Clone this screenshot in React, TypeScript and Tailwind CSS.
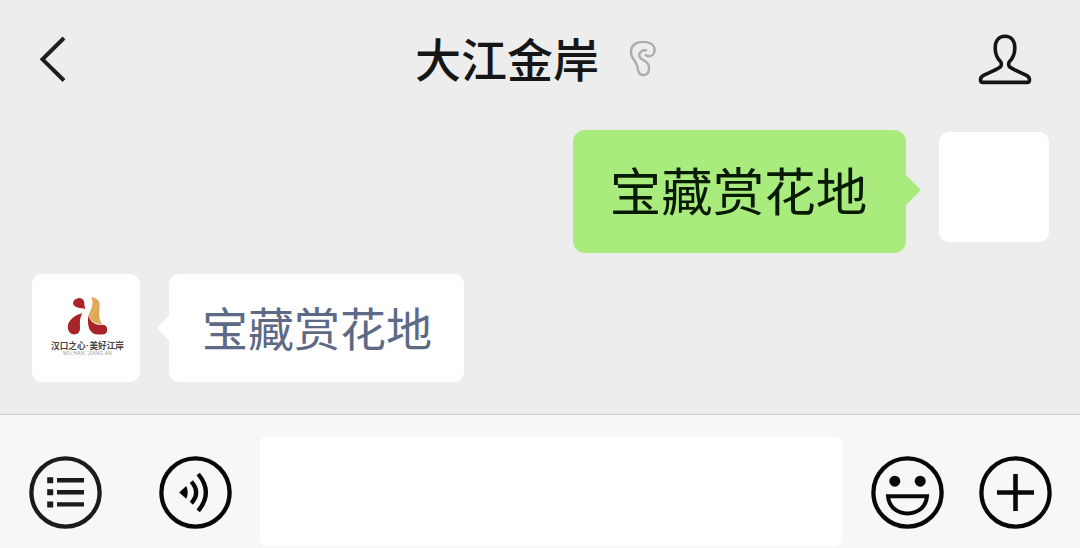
import React from 'react';

const BackIcon: React.FC = () => (
  <svg width="30" height="48" viewBox="0 0 30 48" fill="none" stroke="#1f1f1f" strokeWidth="4">
    <path d="M26 3 L4.5 24.3 L26 45.5" />
  </svg>
);

const EarIcon: React.FC = () => (
  <svg width="28" height="38" viewBox="0 0 28 38" fill="none" stroke="#acacac" strokeWidth="2.4" strokeLinecap="round" strokeLinejoin="round">
    <path d="M17.2 10.4 C13.5 9.8 10.3 12 10.3 15.2 C10.3 18.2 12.4 19.2 15.5 20.8 C18.8 22.6 20 25 20 28.2 C20 32.5 17.8 35 14.3 35 C10.8 35 9.3 32.5 8.8 29 C8.3 24.7 6.4 21.8 4.2 18.8 C2.5 16.5 1.9 14 1.9 11.5 C1.9 5.5 7 1.9 13.8 1.9 C20.8 1.9 25.6 4.8 25.6 10 C25.6 13.8 23.2 16.2 20 16.2 C18.4 16.2 17.4 15.8 16.8 15" />
  </svg>
);

const PersonIcon: React.FC = () => (
  <svg width="54" height="52" viewBox="0 0 54 52" fill="none" stroke="#141414" strokeWidth="3.6" strokeLinejoin="round">
    <path d="M27 3.3 C20.5 3.3 17.2 8.3 17.2 15 C17.2 21 19.2 25.3 22.5 28.5 C23.6 29.6 23.7 32.8 22.2 34 C17.5 37.3 10.5 39.8 5.5 42.3 C3 43.6 2.5 45.1 2.5 47 Q2.5 49.4 5 49.4 H49 Q51.5 49.4 51.5 47 C51.5 45.1 51 43.6 48.5 42.3 C43.5 39.8 36.5 37.3 31.8 34 C30.3 32.8 30.4 29.6 31.5 28.5 C34.8 25.3 36.8 21 36.8 15 C36.8 8.3 33.5 3.3 27 3.3 Z" />
  </svg>
);

const RoundIcon: React.FC<{ label: string; color?: string; children: React.ReactNode }> = ({
  label,
  color = '#080808',
  children,
}) => (
  <button aria-label={label} className="shrink-0">
    <svg width="73" height="73" viewBox="0 0 73 73" fill="none" stroke={color} strokeWidth="4.3">
      <circle cx="36.5" cy="36.5" r="34.1" />
      {children}
    </svg>
  </button>
);

const Logo: React.FC = () => (
  <svg width="42" height="42" viewBox="0 0 42 42" className="ml-[2px]">
    <path d="M12.5 2.2 C16 1.6 18 4 18.3 7 C18.5 9.5 18.6 11.5 19.6 13.3 C17 12.2 14.5 12.6 11.5 11.6 C8.6 10.6 6.9 9 7 6.8 C7.2 4.3 9.6 2.6 12.5 2.2 Z" fill="#a92426" />
    <path d="M16.3 17.3 C9 18.8 1.8 24.5 1.8 31 C1.8 35.5 4.8 38.4 8.4 38.4 C12.6 38.4 14.4 35.2 14 30.5 C13.6 26 14 21 16.3 17.3 Z" fill="#a92426" />
    <path d="M22.6 19 C21.6 24 21.7 30 24 34 C26 37.4 28.5 38.4 32 38.4 H36.5 C40 38.4 41.5 36 41.2 33 C40.9 29.6 39 28.6 35 28.8 C29.3 29 24 26.5 22.6 19 Z" fill="#a92426" />
    <path d="M25.3 1.2 C30.5 1.7 33.6 4.5 33.7 9 C33.8 13 33 16 33.3 20 C33.6 23.5 34.5 26 36 28 C29.8 28.4 23.6 25.4 22.8 18.6 C24.5 13.5 28.5 9 25.3 1.2 Z" fill="#dfaa55" />
    <path d="M30.5 10 C29.5 14.5 26 16.5 24.6 21" stroke="#e8be7a" strokeWidth="1" fill="none" />
  </svg>
);

const App: React.FC = () => {
  return (
    <div className="flex h-[548px] w-[1080px] flex-col overflow-hidden bg-[#ededed] font-['Noto_Sans_CJK_SC',sans-serif]">
      <header className="grid h-[118px] shrink-0 grid-cols-[1fr_auto_1fr] items-center pl-[38px] pr-12">
        <button aria-label="返回" className="justify-self-start">
          <BackIcon />
        </button>
        <div className="flex items-center gap-[30px] pl-[2px]">
          <h1 className="-mt-[5px] text-[46px] font-medium leading-[60px] text-[#161616]">大江金岸</h1>
          <EarIcon />
        </div>
        <button aria-label="公众号资料" className="justify-self-end">
          <PersonIcon />
        </button>
      </header>

      <main className="flex h-[296px] shrink-0 flex-col">
        <div className="flex items-start justify-end pr-[31px] pt-3">
          <div className="relative mr-[33px] flex h-[123px] w-[333px] items-center justify-center rounded-xl bg-[#a9eb7c] pb-[6px] pr-[2px]">
            <span className="text-[51.5px] leading-[60px] text-[#071a03]">宝藏赏花地</span>
            <svg className="absolute -right-[15px] top-[44px]" width="16" height="34" viewBox="0 0 16 34">
              <path d="M0 0 L14.5 14.4 Q16 16 14.5 17.6 L0 32 Z" fill="#a9eb7c" />
            </svg>
          </div>
          <div className="mt-[2px] size-[110px] rounded-[10px] bg-white" />
        </div>

        <div className="mt-[21px] flex pl-8">
          <div className="flex size-[108px] flex-col items-center rounded-[10px] bg-white pt-[22px]">
            <Logo />
            <div className="mt-[2px] whitespace-nowrap pl-[3px] text-[8.6px] font-bold leading-[11px] text-[#4a4343]">
              汉口之心<span className="inline-block w-[4px] text-center font-['Liberation_Sans']">·</span>美好江岸
            </div>
            <div className="-mt-px whitespace-nowrap pl-[3px] font-['Liberation_Sans',sans-serif] text-[5px] leading-[5px] tracking-[0.2px] text-[#9b9696]">
              WU HAN. JIANG AN
            </div>
          </div>
          <div className="relative ml-[29px] flex h-[108px] w-[295px] items-center justify-center rounded-[10px] bg-white pb-1 pl-px">
            <svg className="absolute -left-[12px] top-[38px]" width="14" height="34" viewBox="0 0 14 34">
              <path d="M14 1 L2 13.8 Q0 16 2 18.2 L14 31 Z" fill="#fff" />
            </svg>
            <span className="text-[46px] leading-[60px] text-[#5d6985]">宝藏赏花地</span>
          </div>
        </div>
      </main>

      <footer className="flex flex-1 items-start border-t border-[#cbcbcb] bg-[#f7f7f7] pl-[29px] pr-7">
        <div className="flex gap-[57px] pt-[41px]">
          <RoundIcon label="菜单" color="#1b1b1b">
            <path d="M18.2 24.2h6M18.2 36.2h6M18.2 48.4h6" strokeWidth="6" />
            <path d="M28 24.2h27M28 36.2h27M28 48.4h27" strokeWidth="4.4" />
          </RoundIcon>
          <RoundIcon label="语音">
            <path d="M20.2 36.4 L27.2 30 Q30.4 36.4 27.2 42.8 Z" fill="#080808" stroke="none" />
            <path d="M32.3 25.6 Q42 36.4 32.3 47.2" />
            <path d="M39.2 18 Q54.5 36.4 39.2 54.8" />
          </RoundIcon>
        </div>
        <div className="ml-[28px] mt-[22px] h-[109px] w-[582px] rounded-[6px] bg-white" />
        <div className="ml-[29px] flex gap-[35px] pt-[41px]">
          <RoundIcon label="表情">
            <circle cx="23.8" cy="25.2" r="5.5" fill="#080808" stroke="none" />
            <circle cx="49.2" cy="25.2" r="5.5" fill="#080808" stroke="none" />
            <path d="M17 40.2 H56 C55.2 51 47 57.4 36.5 57.4 S17.8 51 17 40.2Z" strokeWidth="4" />
          </RoundIcon>
          <RoundIcon label="更多">
            <path d="M36.5 18 V55 M18 36.5 H55" strokeWidth="4.6" />
          </RoundIcon>
        </div>
      </footer>
    </div>
  );
};

export default App;
